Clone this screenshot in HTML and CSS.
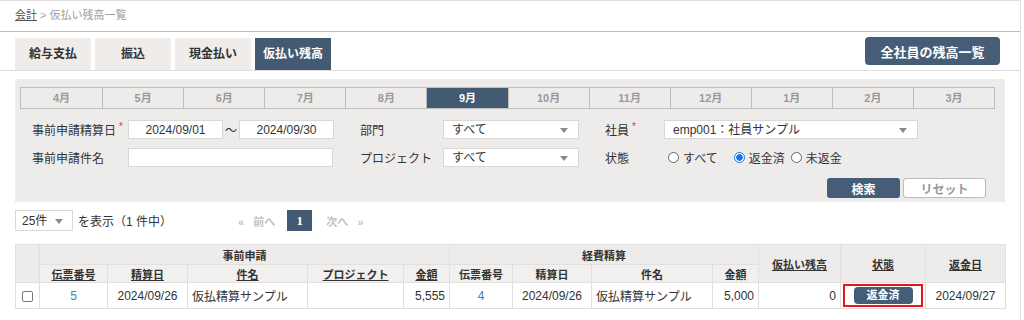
FILE: index.html
```html
<!DOCTYPE html>
<html>
<head>
  <meta charset="utf-8">
  <title>仮払い残高一覧</title>
  <link rel="stylesheet" href="styles.css">
</head>
<body>
  <div class="page">
    <div class="breadcrumb">
      <a href="#">会計</a> &gt; 仮払い残高一覧
    </div>

    <div class="toolbar">
      <div class="tabs">
        <a class="tab" href="#">給与支払</a>
        <a class="tab" href="#">振込</a>
        <a class="tab" href="#">現金払い</a>
        <a class="tab active" href="#">仮払い残高</a>
      </div>
      <button class="btn-all">全社員の残高一覧</button>
    </div>

    <div class="panel">
      <div class="months">
        <span>4月</span><span>5月</span><span>6月</span><span>7月</span>
        <span>8月</span><span class="active">9月</span><span>10月</span><span>11月</span>
        <span>12月</span><span>1月</span><span>2月</span><span>3月</span>
      </div>

      <div class="filters">
        <label>事前申請精算日<i class="req">*</i></label>
        <div class="field dates">
          <input class="date" type="text" value="2024/09/01">
          <span class="tilde">〜</span>
          <input class="date" type="text" value="2024/09/30">
        </div>
        <label>部門</label>
        <div class="select mid"><span>すべて</span><b class="caret"></b></div>
        <label>社員<i class="req">*</i></label>
        <div class="select wide"><span>emp001：社員サンプル</span><b class="caret"></b></div>

        <label>事前申請件名</label>
        <div class="field"><input class="text" type="text" value=""></div>
        <label>プロジェクト</label>
        <div class="select mid"><span>すべて</span><b class="caret"></b></div>
        <label>状態</label>
        <div class="radios">
          <span class="radio"></span>すべて
          <span class="radio on"></span>返金済
          <span class="radio last"></span>未返金
        </div>
      </div>

      <div class="actions">
        <button class="btn-search">検索</button>
        <button class="btn-reset">リセット</button>
      </div>
    </div>

    <div class="pager">
      <div class="select count"><span>25件</span><b class="caret"></b></div>
      <span class="shown">を表示（1 件中）</span>
      <span class="nav prev">«&nbsp;&nbsp;&nbsp;前へ</span>
      <span class="page-no">1</span>
      <span class="nav">次へ&nbsp;&nbsp;&nbsp;»</span>
    </div>

    <table class="list">
      <colgroup>
        <col style="width:24px"><col style="width:68px"><col style="width:80px">
        <col style="width:120px"><col style="width:96px"><col style="width:46px">
        <col style="width:63px"><col style="width:79px"><col style="width:121px">
        <col style="width:46px"><col style="width:82px"><col style="width:85px">
        <col style="width:80px">
      </colgroup>
      <thead>
        <tr class="group">
          <th rowspan="2"></th>
          <th colspan="5">事前申請</th>
          <th colspan="4">経費精算</th>
          <th rowspan="2"><a href="#">仮払い残高</a></th>
          <th rowspan="2"><a href="#">状態</a></th>
          <th rowspan="2"><a href="#">返金日</a></th>
        </tr>
        <tr class="sub">
          <th><a href="#">伝票番号</a></th>
          <th><a href="#">精算日</a></th>
          <th><a href="#">件名</a></th>
          <th><a href="#">プロジェクト</a></th>
          <th><a href="#">金額</a></th>
          <th>伝票番号</th>
          <th>精算日</th>
          <th>件名</th>
          <th>金額</th>
        </tr>
      </thead>
      <tbody>
        <tr>
          <td class="c"><span class="check"></span></td>
          <td class="c"><a class="num" href="#">5</a></td>
          <td class="c">2024/09/26</td>
          <td>仮払精算サンプル</td>
          <td></td>
          <td class="r">5,555</td>
          <td class="c"><a class="num" href="#">4</a></td>
          <td class="c">2024/09/26</td>
          <td>仮払精算サンプル</td>
          <td class="r">5,000</td>
          <td class="r">0</td>
          <td class="c status"><span class="mark"><span class="badge">返金済</span></span></td>
          <td class="c">2024/09/27</td>
        </tr>
      </tbody>
    </table>
  </div>
</body>
</html>
```

FILE: styles.css
```css
body {
  margin: 0;
  background-color: #fff;
  font-family: "Liberation Sans", "Noto Sans CJK JP", sans-serif;
  font-size: 12px;
  color: #333;
}

.page {
  width: 1021px;
  height: 320px;
  border-right: 1px solid #dfe5ec;
  border-top: 1px solid #e0e0e0;
  box-sizing: border-box;
}

.breadcrumb {
  height: 30px;
  line-height: 29px;
  padding-left: 15px;
  font-size: 11px;
  color: #a0a0a0;
  border-bottom: 1px solid #bdbdbd;
}

.breadcrumb a {
  color: #555;
}

/* tabs */

.toolbar {
  display: flex;
  justify-content: space-between;
  align-items: flex-start;
  padding: 6px 20px 0 15px;
  border-bottom: 1px solid #ddd;
}

.tabs {
  display: flex;
  gap: 4px;
}

.tab {
  width: 76px;
  height: 32px;
  line-height: 32px;
  text-align: center;
  background-color: #efecea;
  color: #333;
  font-weight: bold;
  font-size: 12px;
  text-decoration: none;
}

.tab.active {
  background-color: #435a73;
  color: #fff;
}

.btn-all {
  margin-top: -1px;
  width: 135px;
  height: 28px;
  border: none;
  border-radius: 4px;
  background-color: #455d77;
  color: #fff;
  font-family: inherit;
  font-weight: bold;
  font-size: 13px;
}

/* search panel */

.panel {
  margin: 8px 15px 0 15px;
  padding: 8px 10px 4px 5px;
  background-color: #eeeceb;
  height: 111px;
}

.months {
  display: grid;
  grid-template-columns: repeat(12, 1fr);
  border: 1px solid #bdbdbd;
  height: 20px;
}

.months span {
  line-height: 20px;
  text-align: center;
  font-weight: bold;
  font-size: 11px;
  color: #9a9a9a;
  border-left: 1px solid #bdbdbd;
}

.months span:first-child {
  border-left: none;
}

.months .active {
  background-color: #435a73;
  color: #fff;
}

.filters {
  display: grid;
  grid-template-columns: 96px 232px 83px 162px 59px 254px;
  row-gap: 9px;
  align-items: center;
  margin-top: 11px;
  padding-left: 12px;
}

.filters label {
  font-size: 12px;
  color: #333;
  white-space: nowrap;
}

.req {
  color: #e53935;
  font-style: normal;
  font-size: 10px;
  margin-left: 3px;
  vertical-align: top;
}

.field {
  display: flex;
  align-items: center;
}

input {
  height: 19px;
  box-sizing: border-box;
  border: 1px solid #d8d8d8;
  background-color: #fff;
  font-family: inherit;
  font-size: 12px;
  color: #333;
  padding: 0 4px;
}

.date {
  width: 95px;
  text-align: center;
}

.tilde {
  width: 16px;
  text-align: center;
  font-size: 12px;
}

.text {
  width: 205px;
}

.select {
  position: relative;
  height: 19px;
  box-sizing: border-box;
  border: 1px solid #d8d8d8;
  background-color: #fff;
  line-height: 19px;
  padding-left: 8px;
  font-size: 12px;
}

.select.mid {
  width: 136px;
}

.select.wide {
  width: 254px;
}

.caret {
  position: absolute;
  right: 10px;
  top: 7px;
  border-left: 4px solid transparent;
  border-right: 4px solid transparent;
  border-top: 5px solid #8a8a8a;
}

.radios {
  display: flex;
  align-items: center;
  padding-left: 4px;
  font-size: 12px;
  white-space: nowrap;
}

.radio {
  width: 9px;
  height: 9px;
  border: 1px solid #666;
  border-radius: 50%;
  margin: 0 4px 0 0;
  background-color: #fff;
  box-sizing: content-box;
}

.radio.on {
  border-color: #1a73e8;
  background: radial-gradient(circle, #1a73e8 0 3px, #fff 3.5px);
  margin-left: 16px;
}

.radio.last {
  margin-left: 6px;
}

.actions {
  display: flex;
  justify-content: flex-end;
  gap: 3px;
  margin-top: 11px;
  padding-right: 9px;
}

.actions button {
  height: 20px;
  border-radius: 3px;
  font-family: inherit;
  font-weight: bold;
  font-size: 12px;
}

.btn-search {
  width: 73px;
  border: none;
  background-color: #455d77;
  color: #fff;
}

.btn-reset {
  width: 83px;
  border: 1px solid #bbb;
  background-color: #fff;
  color: #999;
}

/* pager */

.pager {
  display: flex;
  align-items: center;
  margin: 8px 15px 0 15px;
  height: 21px;
}

.select.count {
  width: 58px;
  height: 21px;
  line-height: 20px;
  padding-left: 6px;
}

.select.count .caret {
  right: 9px;
  top: 8px;
}

.shown {
  margin-left: 5px;
}

.nav {
  color: #c2c2c2;
  font-weight: bold;
  font-size: 11px;
}

.nav.prev {
  margin-left: 66px;
}

.page-no {
  width: 25px;
  height: 21px;
  line-height: 21px;
  margin: 0 14px 0 12px;
  text-align: center;
  background-color: #435a73;
  color: #fff;
  font-family: "Liberation Serif", serif;
  font-weight: bold;
  font-size: 13px;
}

/* list */

.list {
  margin: 13px 0 0 15px;
  width: 990px;
  border-collapse: collapse;
  table-layout: fixed;
}

.list th {
  background-color: #eeeceb;
  font-size: 11px;
  font-weight: bold;
  color: #333;
  text-align: center;
  border: 1px solid #e2e0df;
  padding: 0;
  white-space: nowrap;
}

.list th a {
  color: #333;
}

.list .group th {
  height: 19px;
}

.list .sub th {
  height: 17px;
  background-color: #f2f0ef;
}

.list td {
  height: 25px;
  border: 1px solid #dedede;
  padding: 0 4px;
  font-size: 12px;
  white-space: nowrap;
}

.list td.c {
  text-align: center;
}

.list td.r {
  text-align: right;
}

.num {
  color: #3a7fc1;
  text-decoration: none;
}

.check {
  display: inline-block;
  width: 9px;
  height: 9px;
  border: 1px solid #777;
  border-radius: 2px;
  vertical-align: middle;
}

.list td.status {
  padding: 0 1px;
}

.mark {
  display: block;
  border: 2px solid #e8121d;
  padding: 1px 0;
  margin: 0 1px;
}

.badge {
  display: inline-block;
  width: 59px;
  height: 17px;
  line-height: 17px;
  border-radius: 4px;
  background-color: #455d77;
  color: #fff;
  font-weight: bold;
  font-size: 11px;
}
```
